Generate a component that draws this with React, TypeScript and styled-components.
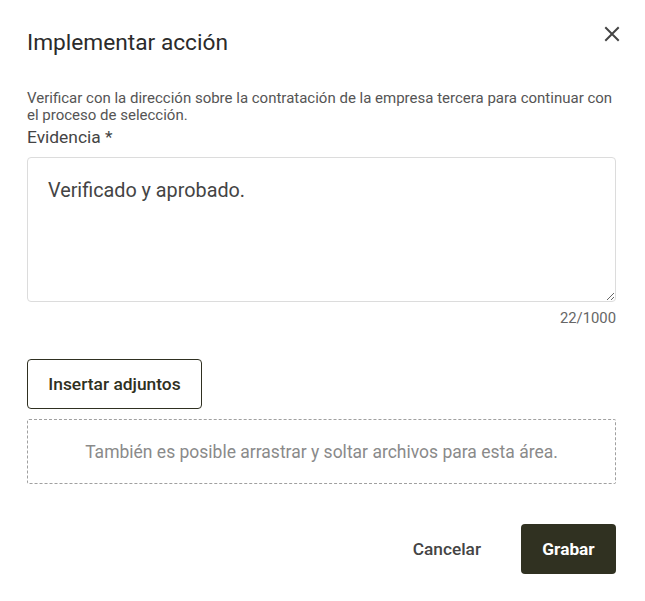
import React from "react";
import styled, { createGlobalStyle } from "styled-components";

const Global = createGlobalStyle`
  html, body { margin: 0; padding: 0; background: #fff; }
  body { font-family: Roboto, "Noto Sans", Arial, sans-serif; }
  * { box-sizing: border-box; }
`;

const Dialog = styled.div`
  width: 645px;
  height: 601px;
  padding: 0 29px 0 27px;
  display: flex;
  flex-direction: column;
  background: #fff;
`;

const Header = styled.div`
  display: flex;
  justify-content: space-between;
  align-items: flex-start;
  padding-top: 29px;
  height: 90px;
`;

const Title = styled.h2`
  margin: 0;
  font-size: 22.7px;
  font-weight: 400;
  line-height: 28px;
  color: #2b2b2b;
`;

const CloseButton = styled.button`
  border: none;
  background: none;
  padding: 0;
  margin: -7px -8px 0 0;
  width: 24px;
  height: 24px;
  display: flex;
  align-items: center;
  justify-content: center;
  color: #444;
  cursor: pointer;
`;

const Description = styled.p`
  margin: 0;
  font-size: 15px;
  line-height: 17px;
  color: #555;
`;

const Label = styled.label`
  display: block;
  font-size: 17.4px;
  line-height: 20px;
  color: #444;
  margin-top: 3px;
`;

const TextArea = styled.textarea`
  margin-top: 10px;
  width: 100%;
  height: 145px;
  border: 1px solid #dcdcdc;
  border-radius: 4px;
  padding: 20px 20px;
  font-family: Roboto, "Noto Sans", Arial, sans-serif;
  font-size: 19.8px;
  line-height: 26px;
  color: #444;
  resize: vertical;
  outline: none;
  display: block;
`;

const Counter = styled.div`
  text-align: right;
  font-size: 14.8px;
  line-height: 18px;
  color: #666;
  margin-top: 7px;
`;

const OutlineButton = styled.button`
  margin-top: 32px;
  align-self: flex-start;
  height: 50px;
  width: 175px;
  border: 1px solid #2f3021;
  border-radius: 4px;
  background: #fff;
  font-family: Roboto, "Noto Sans", Arial, sans-serif;
  font-size: 17.4px;
  font-weight: 500;
  color: #2f3021;
  cursor: pointer;
`;

const DropZone = styled.div`
  margin-top: 10px;
  height: 65px;
  border: 1px dashed #a0a0a0;
  border-radius: 2px;
  display: flex;
  align-items: center;
  justify-content: center;
  font-size: 17.5px;
  color: #8a8a8a;
`;

const Footer = styled.div`
  margin-top: 40px;
  display: flex;
  justify-content: flex-end;
  align-items: center;
  gap: 24px;
`;

const TextButton = styled.button`
  border: none;
  background: none;
  padding: 0 16px;
  height: 50px;
  font-family: Roboto, "Noto Sans", Arial, sans-serif;
  font-size: 17.3px;
  font-weight: 500;
  color: #444;
  cursor: pointer;
`;

const PrimaryButton = styled.button`
  border: none;
  border-radius: 4px;
  background: #303121;
  color: #fff;
  height: 50px;
  width: 95px;
  font-family: Roboto, "Noto Sans", Arial, sans-serif;
  font-size: 17.3px;
  font-weight: 700;
  cursor: pointer;
`;

export default function App() {
  return (
    <>
      <Global />
      <Dialog>
        <Header>
          <Title>Implementar acción</Title>
          <CloseButton aria-label="Cerrar">
            <svg width="16" height="16" viewBox="0 0 16 16">
              <path d="M2 2 L14 14 M14 2 L2 14" stroke="currentColor" strokeWidth="2" strokeLinecap="square" />
            </svg>
          </CloseButton>
        </Header>
        <Description>
          Verificar con la dirección sobre la contratación de la empresa tercera para continuar con el proceso de selección.
        </Description>
        <Label>Evidencia *</Label>
        <TextArea defaultValue="Verificado y aprobado." />
        <Counter>22/1000</Counter>
        <OutlineButton>Insertar adjuntos</OutlineButton>
        <DropZone>También es posible arrastrar y soltar archivos para esta área.</DropZone>
        <Footer>
          <TextButton>Cancelar</TextButton>
          <PrimaryButton>Grabar</PrimaryButton>
        </Footer>
      </Dialog>
    </>
  );
}
